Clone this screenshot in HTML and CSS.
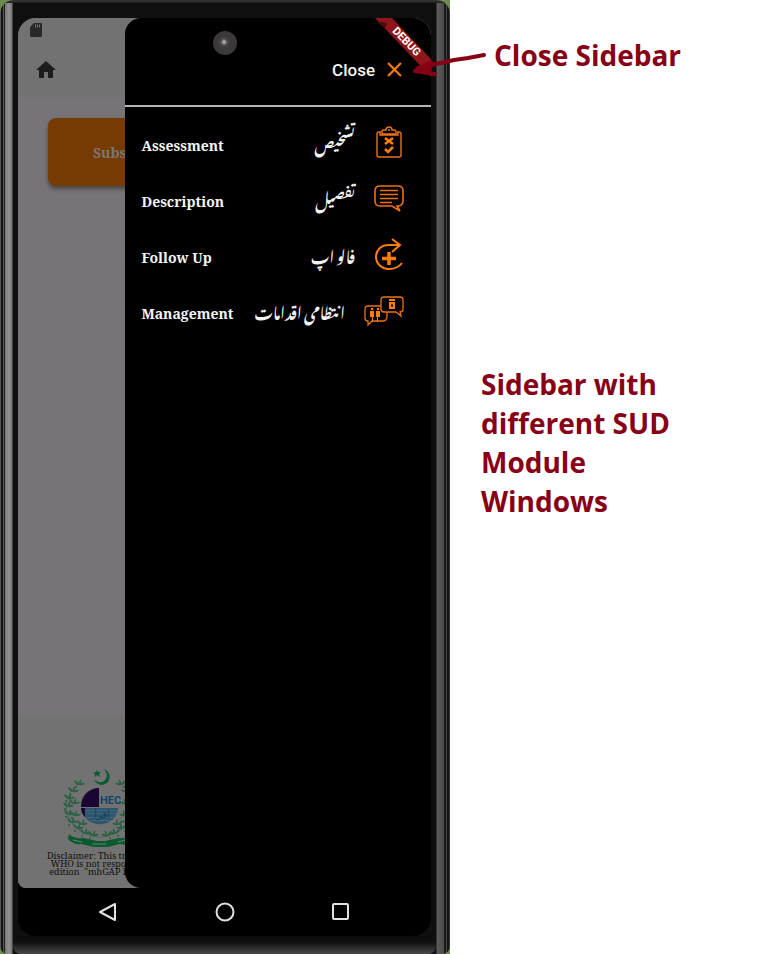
FILE: index.html
```html
<!DOCTYPE html>
<html lang="en">
<head>
<meta charset="utf-8">
<meta name="viewport" content="width=device-width, initial-scale=1">
<title>Sidebar</title>
<link rel="stylesheet" href="styles.css">
</head>
<body>
<main class="sheet">
  <div class="backdrop">
    <div class="phone">
      <div class="bezel">
        <div class="screen">
          <div class="app">
            <div class="page">
              <header class="topbar">
                <svg class="sd" viewBox="0 0 12 14"><path fill="#292929" d="M4 0h7q1 0 1 1v12q0 1-1 1H1q-1 0-1-1V4z"/><path stroke="#747474" d="M5.500 1.500v3M7.500 1.500v3M9.500 1.500v3"/></svg>
                <svg class="home" viewBox="2 3 20 17"><path fill="#1c1c1c" d="M10 20v-6h4v6h5v-8h3L12 3 2 12h3v8z"/></svg>
              </header>
              <section class="content"><button class="module">Subs</button></section>
              <footer class="foot">
                <svg class="logo" viewBox="0 0 76 84">
                  <defs>
                    <g id="sprig" fill="#2a6245"><path d="M0 0q-4 0-5-5 4 1 5 5zM0 0q2-3 6-2-2 3-6 2zM0 0q-1-3 2-6 1 4-2 6z"/><circle cx="-3" cy="2" r="1"/></g>
                  </defs>
                  <path d="M40 1a8 8 0 1 1-9 10 7 7 0 1 0 9-10z" fill="#0a5a30"/>
                  <path d="M34 2l1 2 3 0-2 2 1 3-3-2-2 2 0-3-2-1 3-1z" fill="#0a5a30"/>
                  <g id="branch">
                    <path d="M18 14C3 23-1 42 9 55c6 8 15 13 27 14" fill="none" stroke="#3d6650" stroke-width="0.800"/>
                    <use href="#sprig" x="16" y="17"/><use href="#sprig" x="10" y="24"/><use href="#sprig" x="6" y="31"/><use href="#sprig" x="5" y="39"/><use href="#sprig" x="6" y="47"/><use href="#sprig" x="9" y="55"/><use href="#sprig" x="15" y="61"/><use href="#sprig" x="22" y="66"/><use href="#sprig" x="30" y="68"/><use href="#sprig" x="11" y="36"/><use href="#sprig" x="12" y="48"/><use href="#sprig" x="19" y="57"/>
                  </g>
                  <use href="#branch" transform="matrix(-1 0 0 1 74 0)"/>
                  <path d="M36 20v19H18a18 18 0 0 1 18-19z" fill="#190633"/>
                  <path d="M18 40h37a18 16 0 0 1-33 9z" fill="#2d5670"/>
                  <path d="M18 40h4v9q-4-4-4-9z" fill="#190633"/>
                  <path stroke="#54717f" stroke-width="0.600" d="M22 42.500h33M22 45.500h32M24 49.500h28M28 52.500h21"/>
                  <text x="37" y="36" class="hec">HEC</text>
                  <text x="31" y="50" class="iqra">اقرأ</text>
                  <path d="M6 66q4 5 15 4l13 3h8l14-3q11 1 15-4v8q-6 4-14 2l-12 3H31l-13-3q-8 1-13-5z" fill="#0a5a30"/>
                  <path stroke="#6b8275" d="M10 72l9 2M29 76h14M55 74l8-2"/>
                </svg>
                <p class="disclaimer">Disclaimer: This tr<br>WHO is not respo<br>edition &nbsp;"mhGAP I</p>
              </footer>
            </div>
            <nav class="drawer" aria-label="Modules">
              <div class="drawer-head">
                <button class="close">Close
                  <svg class="cross" viewBox="0 0 14 14"><path d="M1 1l12 12M13 1L1 13" stroke="#ff7d0a" stroke-width="2"/></svg>
                </button>
              </div>
              <ul class="items">
                <li><a class="item" href="#assessment"><span class="label">Assessment</span><span class="urdu" lang="ur" dir="rtl">تشخیص</span>
                  <svg class="icon" viewBox="0 0 30 32"><g fill="none" stroke="#ed7214" stroke-width="1.400"><path d="M7 6H5q-2 0-2 2v21q0 2 2 2h20q2 0 2-2V8q0-2-2-2h-2"/><path d="M8 8V5q0-1 2-1h2q0-3 3-3t3 3h2q2 0 2 1v3zM6 6v3h18V6M14 4h2"/><path stroke="#ff7d0a" stroke-width="2.600" d="M11 12l8 6M19 12l-8 6M11 23l3 3 5-5"/></g></svg></a></li>
                <li><a class="item" href="#description"><span class="label">Description</span><span class="urdu" lang="ur" dir="rtl">تفصیل</span>
                  <svg class="icon" viewBox="0 0 30 32"><g fill="none" stroke="#ed7214" stroke-width="1.600"><path d="M6 4h18q5 0 5 5v10q0 4-4 5h-2l3 5-8-5H6q-5 0-5-5V9q0-5 5-5z"/><path d="M6 8.500h18M6 12.500h18M6 16.500h18M6 20.500h12"/></g></svg></a></li>
                <li><a class="item" href="#follow-up"><span class="label">Follow Up</span><span class="urdu" lang="ur" dir="rtl">فالو اپ</span>
                  <svg class="icon" viewBox="0 0 30 32"><g fill="none" stroke="#ff7d0a" stroke-width="2"><path d="M26 7H15C6 7 2 13 2 19s5 12 13 12c6 0 10-2 13-6M18 1l8 6-8 7"/><path stroke-width="3.500" d="M15 14v13M8 20.500h14"/></g></svg></a></li>
                <li><a class="item" href="#management"><span class="label">Management</span><span class="urdu" lang="ur" dir="rtl">انتظامی اقدامات</span>
                  <svg class="icon wide" viewBox="0 0 40 32"><g fill="none" stroke="#ed7214" stroke-width="1.300"><path d="M20 3h16q3 0 3 3v9q0 3-3 3l1 4-5-4H20q-3 0-3-3V6q0-3 3-3z"/><path d="M17 12H4q-3 0-3 3v9q0 3 3 3v4l4-4h11q4 0 4-5v-4"/></g><path fill="#ff7d0a" d="M25 5h6v2h-6zM25 8h6v7h-6zM6 17h4v6H9v5H8v-5H6zM12 17h4v6h-2v5h-1v-5h-1z"/><circle cx="8" cy="15" r="1.300" fill="#ff7d0a"/><circle cx="14" cy="15" r="1.300" fill="#ff7d0a"/><path d="M27 11.500h2" stroke="#000" stroke-width="2"/></svg></a></li>
              </ul>
            </nav>
            <svg class="banner" viewBox="0 0 60 60"><path d="M4 0h17l39 41v18z" fill="#8f151b"/><path d="M7 5q4-3 9 1l-2 4z" fill="#500a0e"/><text class="debug" transform="translate(33 26) rotate(46)">DEBUG</text></svg>
            <span class="camera"></span>
          </div>
          <div class="sysnav">
            <button aria-label="Back"><svg viewBox="0 0 20 20"><path d="M17 2v16L2 10z"/></svg></button>
            <button aria-label="Home"><svg viewBox="0 0 20 20"><circle cx="10" cy="10" r="8.500"/></svg></button>
            <button aria-label="Recents"><svg viewBox="0 0 20 20"><rect x="2" y="2" width="15" height="15" rx="1"/></svg></button>
          </div>
        </div>
      </div>
    </div>
  </div>
  <aside class="notes">
    <div class="note-close">
      <svg class="arrow" viewBox="0 0 76 28"><g fill="none" stroke="#880015" stroke-linecap="round" stroke-linejoin="round"><path stroke-width="4" d="M74 5L58 8 44 10 26 14 8 18"/><path stroke-width="4" d="M21 12L5 21l20 3M9 19l12-3M8 21l12-1"/></g></svg>
      <h2>Close Sidebar</h2>
    </div>
    <h2 class="note-modules">Sidebar with different SUD Module Windows</h2>
  </aside>
</main>
</body>
</html>
```
FILE: styles.css
```css
* { box-sizing: border-box; }
body { margin: 0; background: #fff; }
button { border: 0; background: none; padding: 0; font: inherit; color: inherit; }
svg { display: block; flex: none; overflow: visible; }

.sheet { display: grid; grid-template-columns: 450fr 323fr; min-height: 100vh; }
.backdrop { display: grid; background: #6f8a50; }
.phone {
  display: grid;
  padding: 3px 14px 0 13px;
  border-radius: 14px 14px 8px 8px;
  background:
    linear-gradient(180deg, #333 1px, #1a1a1a 3px, transparent 3px),
    linear-gradient(90deg, #555 1px, #151515 1px 3px, #555 3px 4px, #202020 4px 5px, #777 5px, #929292 9px, #777 12px, #0f0f0f 13px 50%, transparent 50%),
    linear-gradient(270deg, #333 1px, #161616 1px 3px, #444 3px 4px, #1a1a1a 4px 6px, #4a4a4a 6px, #5c5c5c 13px, #0f0f0f 14px);
}
.bezel {
  display: grid;
  padding: 15px 5px 18px;
  border-radius: 20px 20px 8px 8px;
  background: linear-gradient(0deg, #4a4a4a, #0f0f0f 12px);
}
.screen { display: grid; grid-template-rows: 1fr 48px; background: #000; border-radius: 18px; overflow: hidden; }
.app { position: relative; display: grid; }

.page { display: grid; grid-template-rows: 79px 1fr 172px; background: #777477; border-radius: 0 0 8px 8px; overflow: hidden; }
.topbar { background: #727272; padding: 5px 12px; }
.sd { width: 12px; height: 14px; }
.home { width: 20px; height: 17px; margin: 24px 0 0 6px; }
.content { padding: 21px 30px; }
.module {
  display: block;
  width: 100%;
  height: 68px;
  padding-left: 45px;
  border-radius: 8px;
  background: #773a00;
  color: #777;
  box-shadow: 0 3px 4px #0006;
  text-align: left;
  font: bold 14px "Noto Serif", "DejaVu Serif Condensed", "DejaVu Serif", serif;
}
.foot { background: #727272; padding-top: 52px; }
.logo { width: 76px; height: 84px; margin-left: 45px; }
.hec { font: bold 11px "Roboto", sans-serif; fill: #10466d; }
.iqra { font: 10px "DejaVu Sans", sans-serif; fill: #153f5c; }
.disclaimer {
  width: 108px;
  margin: 0;
  text-align: right;
  color: #111;
  font: 9px/8px "Noto Serif", "DejaVu Serif Condensed", "DejaVu Serif", serif;
  white-space: nowrap;
}

.drawer {
  position: absolute;
  inset: 0 0 0 auto;
  width: 74%;
  background: #000;
  border-radius: 16px 0 0 16px;
  color: #f4f4f4;
  overflow: hidden;
}
.drawer-head { display: flex; justify-content: flex-end; height: 89px; padding: 16px 29px 0 0; border-bottom: 2px solid #b5b5b5; }
.close { display: flex; align-items: center; gap: 12px; font: 500 17px "Roboto", sans-serif; }
.cross { width: 15px; height: 15px; }
.items { list-style: none; margin: 0; padding: 7px 27px 0 16px; }
.item {
  display: flex;
  align-items: center;
  height: 56px;
  color: inherit;
  text-decoration: none;
  white-space: nowrap;
  font: bold 14px "Noto Serif", "DejaVu Serif Condensed", "DejaVu Serif", serif;
}
.label { padding-top: 7px; }
.urdu { margin-left: auto; font: bold 15px "Noto Nastaliq Urdu", "DejaVu Sans", sans-serif; }
.icon { width: 30px; height: 32px; margin-left: 19px; }
.wide { width: 40px; }

.banner { position: absolute; top: 0; right: 0; width: 60px; height: 60px; }
.debug { font: bold 11px "Roboto", sans-serif; fill: #fff; text-anchor: middle; }
.camera {
  position: absolute;
  top: 13px;
  left: 50%;
  width: 24px;
  height: 24px;
  margin-left: -12px;
  border-radius: 50%;
  background: radial-gradient(circle at 46% 46%, #aaa 1px, #554d54 3px, #3a3a3a 6px);
}

.sysnav { display: flex; justify-content: space-between; align-items: center; padding: 0 80px; }
.sysnav svg { width: 20px; height: 20px; fill: none; stroke: #e4e0e2; stroke-width: 2; stroke-linejoin: round; }

.notes { color: #880015; padding: 36px 28px; }
.notes h2 { margin: 0; font: bold 28px/39px "Open Sans", "Noto Sans", sans-serif; }
.note-close { position: relative; padding-left: 16px; white-space: nowrap; }
.arrow { position: absolute; left: -68px; top: 14px; width: 76px; height: 28px; }
.notes .note-modules { width: 215px; max-width: 100%; margin-top: 290px; padding-left: 3px; }
```
